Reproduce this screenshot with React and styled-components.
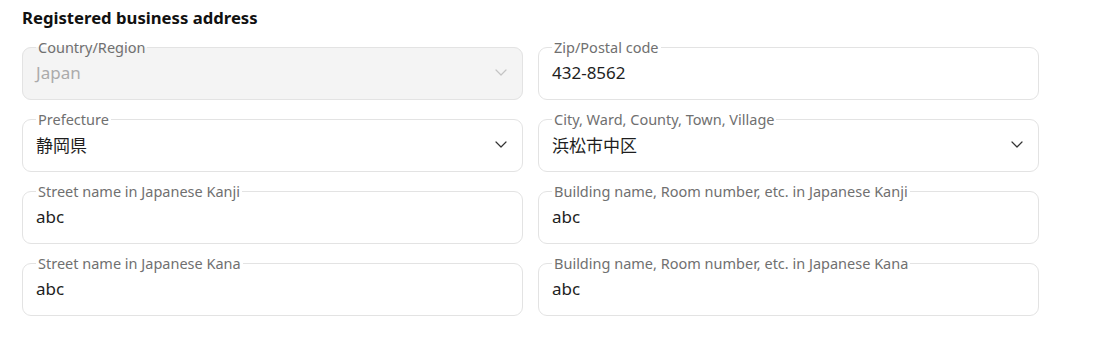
import styled, { createGlobalStyle } from "styled-components";

const Global = createGlobalStyle`
    body {
        margin: 0;
        background: #FFFFFF;
        font-family: "Noto Sans", "Noto Sans CJK JP", sans-serif;
    }
`

const fields = [
    { label: "Country/Region", value: "Japan", select: true, disabled: true },
    { label: "Zip/Postal code", value: "432-8562" },
    { label: "Prefecture", value: "静岡県", select: true },
    { label: "City, Ward, County, Town, Village", value: "浜松市中区", select: true },
    { label: "Street name in Japanese Kanji", value: "abc" },
    { label: "Building name, Room number, etc. in Japanese Kanji", value: "abc" },
    { label: "Street name in Japanese Kana", value: "abc" },
    { label: "Building name, Room number, etc. in Japanese Kana", value: "abc" },
];

function Chevron({ disabled }) {
    return (
        <svg width="12" height="7" viewBox="0 0 12 7" fill="none">
            <polyline
                points="1,1 6,6 11,1"
                stroke={disabled ? "#C4C4C4" : "#333333"}
                strokeWidth="1.2"
                strokeLinecap="round"
                strokeLinejoin="round"
            />
        </svg>
    )
}

export default function App() {
    return (
        <>
            <Global />
            <Section>
                <Title>Registered business address</Title>
                <Grid>
                    {fields.map((f) => (
                        <Field key={f.label} $disabled={f.disabled}>
                            <Legend>{f.label}</Legend>
                            <Control>
                                <Value $disabled={f.disabled}>{f.value}</Value>
                                {f.select && <Chevron disabled={f.disabled} />}
                            </Control>
                        </Field>
                    ))}
                </Grid>
            </Section>
        </>
    )
}

const Section = styled.div`
    width: 1017px;
    padding: 6px 0 0 22px;
`

const Title = styled.h2`
    margin: 0 0 9px;
    font-size: 16.7px;
    line-height: 24px;
    font-weight: 700;
    color: #111111;
`

const Grid = styled.div`
    display: grid;
    grid-template-columns: 1fr 1fr;
    column-gap: 15px;
    row-gap: 11px;
`

const Field = styled.fieldset`
    margin: 0;
    padding: 0 15px 0 13px;
    min-width: 0;
    border: 1px solid #E3E3E3;
    border-radius: 9px;
    background: ${(p) => (p.$disabled ? "#F4F4F4" : "#FFFFFF")};
`

const Legend = styled.legend`
    padding: 0 2px;
    font-size: 14.5px;
    line-height: 16px;
    color: #707070;
`

const Control = styled.div`
    display: flex;
    align-items: center;
    justify-content: space-between;
    height: 24px;
    padding: 5px 0 15px;
`

const Value = styled.span`
    font-size: 17px;
    color: ${(p) => (p.$disabled ? "#ABABAB" : "#1E1E1E")};
`
